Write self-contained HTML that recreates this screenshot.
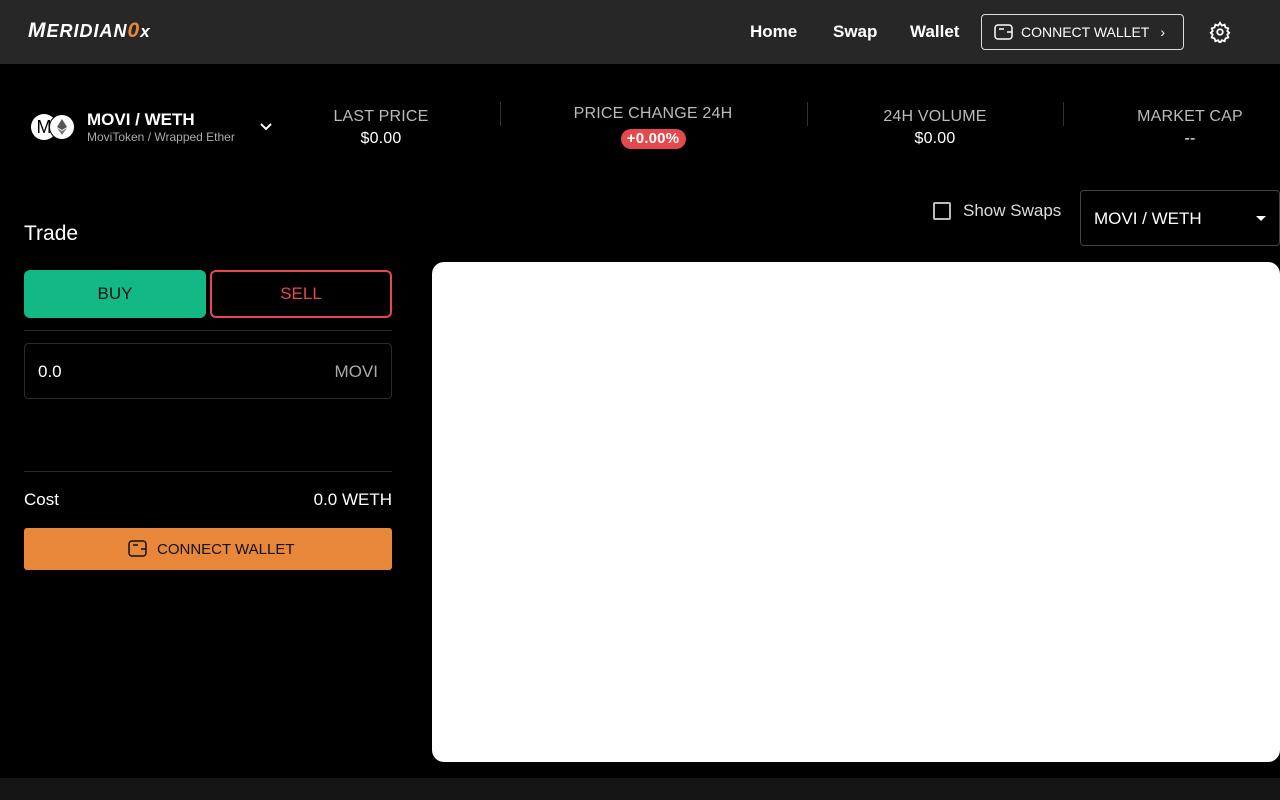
<!DOCTYPE html>
<html><head><style>
*{box-sizing:border-box;margin:0;padding:0}
body{width:1280px;height:800px;background:#000;font-family:"Liberation Sans",sans-serif;color:#fff;position:relative;overflow:hidden}
.hdr{position:absolute;left:0;top:0;width:1280px;height:64px;background:#272727}
.abs{position:absolute}
.nav{font-size:17px;font-weight:bold;top:22px}
.stat{position:absolute;text-align:center;font-size:16px;color:#bbb;letter-spacing:.2px}
.stat .v{color:#fff;font-size:16px;margin-top:4px}
.sep{position:absolute;top:102px;width:1px;height:24px;background:#333}
</style></head><body>
<div class="hdr"></div>
<div class="abs" style="left:28px;top:19px;font-size:21px;font-weight:bold;font-style:italic;letter-spacing:1px;white-space:nowrap">M<span style="font-size:18px">ERIDIAN</span><span style="color:#e8873a;font-size:21px">0</span><span style="font-size:17px">x</span></div>
<div class="abs nav" style="left:750px">Home</div>
<div class="abs nav" style="left:833px">Swap</div>
<div class="abs nav" style="left:910px">Wallet</div>
<div class="abs" style="left:981px;top:14px;width:203px;height:36px;border:1px solid #ddd;border-radius:4px;font-size:14px;line-height:34px;padding-left:39px">CONNECT WALLET<span style="position:absolute;right:18px">›</span>
<svg style="position:absolute;left:12px;top:9px" width="19" height="16" viewBox="0 0 19 16" fill="none" stroke="#fff" stroke-width="1.5"><rect x="1" y="1" width="17" height="14" rx="3"/><path d="M5 5h5M13 8h5"/></svg></div>
<svg class="abs" style="left:1209px;top:21px" width="22" height="22" viewBox="0 0 24 24" fill="none" stroke="#fff" stroke-width="2"><circle cx="12" cy="12" r="3"/><path d="M12 2l2 3 3-1 1 3 3 1-1 3 2 2-2 2 1 3-3 1-1 3-3-1-2 3-2-3-3 1-1-3-3-1 1-3-2-2 2-2-1-3 3-1 1-3 3 1z"/></svg>

<div class="abs" style="left:31px;top:114px;width:26px;height:26px;border-radius:50%;background:#fff;color:#000;font-size:18px;text-align:center;line-height:26px">M</div>
<div class="abs" style="left:49px;top:114px;width:26px;height:26px;border-radius:50%;background:#fff;border:1px solid #000"><svg width="24" height="24" viewBox="0 0 24 24"><path d="M12 4l-5 8 5 3 5-3z" fill="#555"/><path d="M12 16l-5-3 5 7 5-7z" fill="#777"/></svg></div>
<div class="abs" style="left:87px;top:110px;font-size:17px;font-weight:bold">MOVI / WETH</div>
<div class="abs" style="left:87px;top:130px;font-size:12px;color:#aaa">MoviToken / Wrapped Ether</div>
<svg class="abs" style="left:259px;top:122px" width="14" height="10" viewBox="0 0 14 10" fill="none" stroke="#fff" stroke-width="2"><path d="M2 2l5 5 5-5"/></svg>

<div class="stat" style="left:321px;top:108px;width:120px">LAST PRICE<div class="v">$0.00</div></div>
<div class="sep" style="left:500px"></div>
<div class="stat" style="left:560px;top:105px;width:186px">PRICE CHANGE 24H<div style="margin:6px auto 0;width:65px;height:20px;border-radius:10px;background:#e5484d;color:#fff;font-weight:bold;font-size:15px;line-height:20px">+0.00%</div></div>
<div class="sep" style="left:807px"></div>
<div class="stat" style="left:865px;top:108px;width:140px">24H VOLUME<div class="v">$0.00</div></div>
<div class="sep" style="left:1063px"></div>
<div class="stat" style="left:1130px;top:108px;width:120px">MARKET CAP<div class="v">--</div></div>

<div class="abs" style="left:24px;top:222px;font-size:21px">Trade</div>
<div class="abs" style="left:24px;top:270px;width:182px;height:48px;background:#12b886;border-radius:6px;color:#111;font-size:17px;text-align:center;line-height:48px">BUY</div>
<div class="abs" style="left:210px;top:270px;width:182px;height:48px;border:2px solid #e5484d;border-radius:6px;color:#e5484d;font-size:17px;text-align:center;line-height:44px">SELL</div>
<div class="abs" style="left:24px;top:330px;width:368px;height:1px;background:#2a2a2a"></div>
<div class="abs" style="left:24px;top:343px;width:368px;height:56px;border:1px solid #2a2a2a;border-radius:4px;font-size:17px;line-height:56px;padding:0 13px">0.0<span style="float:right;color:#aaa">MOVI</span></div>
<div class="abs" style="left:24px;top:471px;width:368px;height:1px;background:#2a2a2a"></div>
<div class="abs" style="left:24px;top:490px;font-size:17px">Cost</div>
<div class="abs" style="left:260px;top:490px;width:132px;text-align:right;font-size:17px">0.0 WETH</div>
<div class="abs" style="left:24px;top:528px;width:368px;height:42px;background:#e8873a;border-radius:3px;color:#111;font-size:15px;line-height:43px;padding-left:133px">CONNECT WALLET
<svg style="position:absolute;left:104px;top:12px" width="19" height="17" viewBox="0 0 19 17" fill="none" stroke="#111" stroke-width="1.5"><rect x="1" y="1" width="17" height="15" rx="3"/><path d="M5 5h5M13 9h5"/></svg></div>

<div class="abs" style="left:933px;top:202px;width:18px;height:18px;border:2px solid #bbb;border-radius:2px"></div>
<div class="abs" style="left:963px;top:201px;font-size:17px;color:#ddd">Show Swaps</div>
<div class="abs" style="left:1080px;top:190px;width:200px;height:56px;border:1px solid #444;border-radius:4px;font-size:17px;line-height:56px;padding-left:13px">MOVI / WETH<span style="position:absolute;right:13px;top:25px;border:5px solid transparent;border-top-color:#fff;border-bottom:0"></span></div>
<div class="abs" style="left:432px;top:262px;width:848px;height:500px;background:#fff;border-radius:12px"></div>
<div class="abs" style="left:0;top:778px;width:1280px;height:22px;background:#141414"></div>
</body></html>
